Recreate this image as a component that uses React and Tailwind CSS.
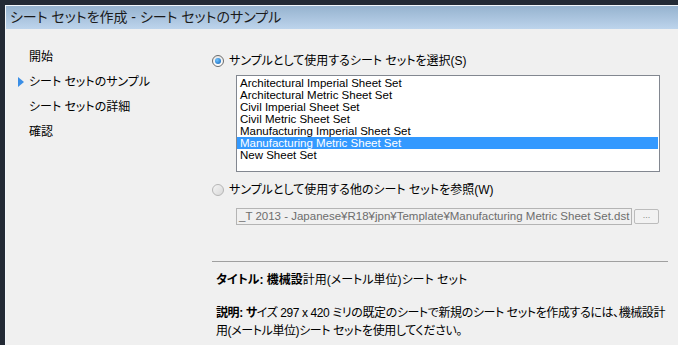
import React from 'react'

const jp = "[font-family:'Liberation_Sans','Noto_Sans_CJK_JP',sans-serif] [font-feature-settings:'palt']"

const sheetSets = [
  'Architectural Imperial Sheet Set',
  'Architectural Metric Sheet Set',
  'Civil Imperial Sheet Set',
  'Civil Metric Sheet Set',
  'Manufacturing Imperial Sheet Set',
  'Manufacturing Metric Sheet Set',
  'New Sheet Set',
]

const steps = ['開始', 'シート セットのサンプル', 'シート セットの詳細', '確認']

function Radio({ checked }) {
  if (checked) {
    return (
      <span className="w-[12px] h-[12px] rounded-full border border-[#6b6b6b] bg-gradient-to-b from-[#e8e8e8] to-[#ffffff] flex items-center justify-center shrink-0">
        <span className="w-[6px] h-[6px] rounded-full bg-[radial-gradient(circle_at_35%_35%,#6ec3ff,#0f5fb5)]" />
      </span>
    )
  }
  return (
    <span className="w-[12px] h-[12px] rounded-full border border-[#b5b5b5] bg-gradient-to-br from-[#f4f4f4] to-[#d9d9d9] shrink-0" />
  )
}

export default function App() {
  return (
    <div className={`w-[678px] h-[345px] bg-[#232a35] pt-[5px] pl-[5px] overflow-hidden text-[12px] text-black ${jp}`}>
      <div className="h-full flex flex-col border-t border-l border-[#f2f6fb]">
        {/* title bar */}
        <div className="h-[23px] shrink-0 bg-gradient-to-b from-[#96b3cf] to-[#bdd4ec] flex items-center pl-[4px] text-[14px] text-[#1b1b1b]">
          シート セットを作成 - シート セットのサンプル
        </div>

        <div className="flex-1 flex bg-[#f0f0f0]">
          {/* steps */}
          <div className="w-[205px] shrink-0 pt-[15px] flex flex-col">
            {steps.map((s, i) => (
              <div key={s} className="h-[25px] flex items-center">
                <span className="w-[23px] flex justify-end pr-[5px]">
                  {i === 1 && (
                    <svg width="6" height="10" viewBox="0 0 6 10">
                      <path d="M0 0 L6 5 L0 10 Z" fill="#3a8ee6" />
                    </svg>
                  )}
                </span>
                <span>{s}</span>
              </div>
            ))}
          </div>

          {/* main panel */}
          <div className="flex-1 pl-[1px] pt-[24px] flex flex-col">
            <div className="h-[16px] flex items-center gap-[5px]">
              <Radio checked />
              <span>サンプルとして使用するシート セットを選択(S)</span>
            </div>

            <div className="ml-[24px] mt-[6px] w-[424px] h-[97px] border border-[#828790] bg-white pt-[1px] flex flex-col">
              {sheetSets.map((name, i) => (
                <div
                  key={name}
                  className={`h-[12px] leading-[12px] text-[11.5px] pl-[3px] mr-[1px] ${i === 5 ? 'bg-[#3399ff] text-white' : ''}`}
                >
                  {name}
                </div>
              ))}
            </div>

            <div className="h-[16px] mt-[10px] flex items-center gap-[5px]">
              <Radio />
              <span>サンプルとして使用する他のシート セットを参照(W)</span>
            </div>

            <div className="ml-[24px] mt-[10px] flex items-center gap-[2px]">
              <div className="w-[396px] h-[17px] border border-[#b4b4b4] bg-[#f0f0f0] flex items-center whitespace-nowrap pl-[2px] text-[11.5px] text-[#6d6d6d]">
                _T 2013 - Japanese¥R18¥jpn¥Template¥Manufacturing Metric Sheet Set.dst
              </div>
              <div className="w-[25px] h-[15px] border border-[#bcbcbc] rounded-[2px] bg-[#f2f2f2] flex items-center justify-center text-[9px] text-[#8a8a8a] leading-none pb-[3px]">
                ...
              </div>
            </div>

            <div className="mt-[36px] w-[456px] border-t border-[#a0a0a0]" />

            <div className="pl-[4px] mt-[10px] h-[16px] flex items-center">
              <span className="font-bold">タイトル: 機械設</span>
              <span>計用(メートル単位)シート セット</span>
            </div>

            <div className="pl-[4px] mt-[16px] leading-[18px] whitespace-nowrap tracking-[-0.4px]">
              <div>
                <span className="font-bold">説明: サ</span>
                <span>イズ 297 x 420 ミリの既定のシートで新規のシート セットを作成するには、機械設計</span>
              </div>
              <div>用(メートル単位)シート セットを使用してください。</div>
            </div>
          </div>
        </div>
      </div>
    </div>
  )
}
